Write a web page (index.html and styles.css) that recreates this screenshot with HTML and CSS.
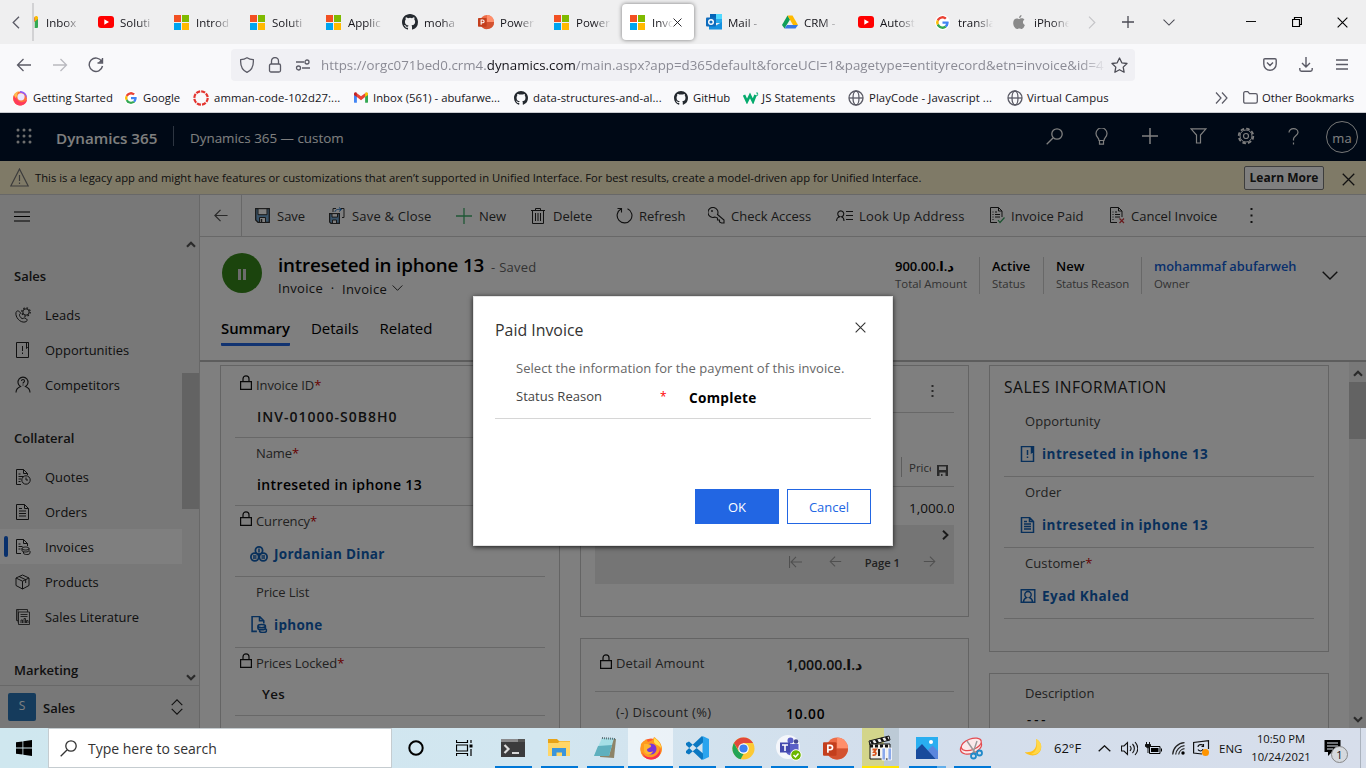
FILE: index.html
```html
<!DOCTYPE html>
<html lang="en">
<head>
<meta charset="utf-8">
<title>Invoice: intreseted in iphone 13</title>
<link rel="stylesheet" href="styles.css">
</head>
<body>
<svg class="defs" aria-hidden="true">
  <symbol id="ms" viewBox="0 0 15 15"><path fill="#f25022" d="M0 0h7v7H0z"/><path fill="#7fba00" d="M8 0h7v7H8z"/><path fill="#00a4ef" d="M0 8h7v7H0z"/><path fill="#ffb900" d="M8 8h7v7H8z"/></symbol>
  <symbol id="yt" viewBox="0 0 16 16"><rect y="2" width="16" height="12" rx="3" fill="#f00"/><path d="M6.3 5.3v5.4L11 8z" fill="#fff"/></symbol>
  <symbol id="gh" viewBox="0 0 16 16"><path fill="#24292f" fill-rule="evenodd" d="M8 0C3.58 0 0 3.58 0 8c0 3.54 2.29 6.53 5.47 7.59.4.07.55-.17.55-.38v-1.49c-2.01.37-2.53-.49-2.69-.94-.09-.23-.48-.94-.82-1.13-.28-.15-.68-.52-.01-.53.63-.01 1.08.58 1.23.82.72 1.21 1.87.87 2.33.66.07-.52.28-.87.51-1.07-1.78-.2-3.64-.89-3.64-3.95 0-.87.31-1.59.82-2.15-.08-.2-.36-1.02.08-2.12 0 0 .67-.21 2.2.82a7.6 7.6 0 0 1 4 0c1.53-1.04 2.2-.82 2.2-.82.44 1.1.16 1.92.08 2.12.51.56.82 1.27.82 2.15 0 3.07-1.87 3.75-3.65 3.95.29.25.54.73.54 1.48v2.2c0 .21.15.46.55.38A8 8 0 0 0 16 8c0-4.42-3.58-8-8-8z"/></symbol>
  <symbol id="ppt" viewBox="0 0 24 22"><circle cx="13.5" cy="11" r="10.5" fill="#ed6c47"/><path d="M13.500.5A10.500 10.500 0 0 1 24 11H13.500z" fill="#ff8f6b"/><path d="M24 11A10.500 10.500 0 0 1 4.500 16.500L13.500 11z" fill="#d35230"/><rect y="5" width="13" height="13" rx="1" fill="#c43e1c"/><path d="M4.700 15V8h2.200c3 0 3 4.200 0 4.200H4.700" fill="none" stroke="#fff" stroke-width="1.600"/></symbol>
  <symbol id="goo" viewBox="0 0 48 48"><path fill="#ea4335" d="M24 9.500c3.500 0 6.700 1.200 9.200 3.600l6.900-6.900C35.900 2.400 30.500 0 24 0 14.600 0 6.500 5.400 2.600 13.200l8 6.200C12.400 13.700 17.700 9.500 24 9.500z"/><path fill="#4285f4" d="M47 24.600c0-1.600-.2-3.100-.4-4.600H24v9h12.900c-.6 3-2.200 5.500-4.700 7.200l7.700 6C44.400 38 47 31.800 47 24.600z"/><path fill="#fbbc05" d="M10.500 28.600a14 14 0 0 1 0-9.200l-8-6.200a24 24 0 0 0 0 21.600z"/><path fill="#34a853" d="M24 48c6.500 0 11.900-2.100 15.900-5.800l-7.700-6c-2.200 1.500-4.900 2.300-8.200 2.300-6.300 0-11.600-4.200-13.500-9.900l-8 6.200C6.500 42.600 14.600 48 24 48z"/></symbol>
  <symbol id="gm" viewBox="0 0 16 12"><path fill="#4285f4" d="M0 1.500h3.300V12H1a1 1 0 0 1-1-1z"/><path fill="#34a853" d="M12.700 1.500H16V11a1 1 0 0 1-1 1h-2.300z"/><path fill="#ea4335" d="M3.300 5.500V1L8 4.600 12.700 1v4.500L8 9z"/><path fill="#c5221f" d="M0 1.800C0 0 2-.5 3.300.6v4.900L0 3z"/><path fill="#fbbc04" d="M16 1.800C16 0 14-.5 12.700.6v4.900L16 3z"/></symbol>
  <symbol id="globe" viewBox="0 0 16 16"><g fill="none" stroke="#5b5b66" stroke-width="1.300"><circle cx="8" cy="8" r="7"/><ellipse cx="8" cy="8" rx="3" ry="7"/><path d="M1 8h14"/></g></symbol>
  <symbol id="lock" viewBox="0 0 12 15"><path d="M.6 6.600h10.800v7.800H.6zM3 6.500V3.800a3 3 0 0 1 6 0v2.700" fill="none" stroke="#111" stroke-width="1.200"/></symbol>
  <symbol id="doc" viewBox="0 0 16 16"><path d="M1.500.5h8l4 4v11h-12zM9.500.5v4h4M4 7h7M4 9.500h7M4 12h7M4 4.500h3" fill="none" stroke="currentColor"/></symbol>
  <symbol id="opp" viewBox="0 0 16 16"><path d="M1.500.5h12v15h-12z M11.500.5v6l1-1 1 1v-6M7.500 4v5M7.500 10.500v1.500" fill="none" stroke="currentColor"/></symbol>
  <symbol id="invd" viewBox="0 0 16 16"><path d="M6 14.500H1.500V.5h7l4 4V7M8.500.5v4h4" fill="none" stroke="currentColor"/><path d="M7 9.500c0-2 7-2 7 0s-7 2-7 0v2c0 2 7 2 7 0v-2M8.500 13v1c0 2 6.500 2 6.500 0v-2" fill="none" stroke="currentColor"/></symbol>
  <symbol id="inv" viewBox="0 0 17 17"><path d="M8 15.500H1.500V.5h8l3.500 3.500v6M9.500.5V4H13M3.500 5h1M6 5h2M3.500 7.500h1M6 7.500h5M3.500 10h1M6 10h5M3.500 12.500h1" fill="none" stroke="#222"/></symbol>
  <symbol id="larr" viewBox="0 0 16 16"><path d="M15 8H1.500M7.500 2l-6 6 6 6" fill="none" stroke="currentColor" stroke-width="1.300"/></symbol>
  <symbol id="rarr" viewBox="0 0 16 16"><path d="M1 8h13.500M8.500 2l6 6-6 6" fill="none" stroke="currentColor" stroke-width="1.300"/></symbol>
  <symbol id="down" viewBox="0 0 16 9"><path d="M.7.700 8 8 15.300.7" fill="none" stroke="currentColor" stroke-width="1.400"/></symbol>
  <symbol id="chev" viewBox="0 0 10 7"><path d="M1 1.200 5 5.200 9 1.200" fill="none" stroke="currentColor" stroke-width="2.200"/></symbol>
  <symbol id="mag" viewBox="0 0 17 17"><path d="M.7 16.300 7 10" stroke="currentColor" stroke-width="1.300"/><circle cx="11" cy="6" r="5.200" fill="none" stroke="currentColor" stroke-width="1.300"/></symbol>
  <symbol id="x" viewBox="0 0 12 12"><path d="M.7.700l10.600 10.600M11.300.7.700 11.300" stroke="currentColor" stroke-width="1.200"/></symbol>
  <symbol id="floppy" viewBox="0 0 15 15"><path d="M.7.700h13.600v13.600H3L.7 12z" fill="#74a9d4" stroke="#333" stroke-width="1.300"/><path d="M3 .7h9v6H3z" fill="#fff" stroke="#333"/><path d="M4.500 14V9.500h6V14" fill="#fff" stroke="#333"/><path d="M6.500 11v3" stroke="#333" stroke-width="1.500"/></symbol>
</svg>

<header class="browser">
  <div class="tabstrip">
    <svg class="scroll-left" width="8" height="13" viewBox="0 0 8 13"><path d="M7 .7 1.200 6.500 7 12.300" fill="none" stroke="#5b5b66" stroke-width="1.300"/></svg>
    <div class="tab first"><svg width="16" height="12"><use href="#gm"/></svg><span>Inbox</span></div>
    <div class="tab"><svg width="16" height="16"><use href="#yt"/></svg><span>Soluti</span></div>
    <div class="tab"><svg width="15" height="15"><use href="#ms"/></svg><span>Introd</span></div>
    <div class="tab"><svg width="15" height="15"><use href="#ms"/></svg><span>Soluti</span></div>
    <div class="tab"><svg width="15" height="15"><use href="#ms"/></svg><span>Applic</span></div>
    <div class="tab"><svg width="16" height="16"><use href="#gh"/></svg><span>moha</span></div>
    <div class="tab"><svg width="16" height="16"><use href="#ppt"/></svg><span>Power</span></div>
    <div class="tab"><svg width="15" height="15"><use href="#ms"/></svg><span>Power</span></div>
    <div class="tab active"><svg width="15" height="15"><use href="#ms"/></svg><span>Invo</span><svg class="tab-x" width="9" height="9"><use href="#x"/></svg></div>
    <div class="tab"><svg width="16" height="16" viewBox="0 0 16 16"><path fill="#28a8ea" d="M4 0h12v9H4z"/><path fill="#0364b8" d="M4 0h6v6H4z"/><path fill="#50d9ff" d="M10 0h6v5h-6z"/><path fill="#1490df" d="M3 15.500V8l6 4 7-4v7.500z"/><rect y="3.500" width="10" height="9" rx="1" fill="#0f6cbd"/><circle cx="5" cy="8" r="2.300" fill="none" stroke="#fff" stroke-width="1.400"/></svg><span>Mail -</span></div>
    <div class="tab"><svg width="16" height="16" viewBox="0 0 16 16"><path fill="#0f9d58" d="M5.500 1.500 0 11l2.500 3.500L8 5.500z"/><path fill="#ffba00" d="M5.500 1.500h5L16 11h-5z"/><path fill="#3777e3" d="M5 11h11l-2.500 3.500h-11z"/></svg><span>CRM -</span></div>
    <div class="tab"><svg width="16" height="16"><use href="#yt"/></svg><span>Autost</span></div>
    <div class="tab goog"><svg width="13" height="13" class="disc"><use href="#goo"/></svg><span>transla</span></div>
    <div class="tab apple"><svg width="12" height="14" viewBox="0 0 12 14"><path fill="#8a8a8a" d="M8.500 0c.1 1.500-1 2.900-2.400 2.900C6 1.500 7.100.2 8.500 0zM6.200 4c.7 0 1.300-.7 2.500-.7 1 0 2 .5 2.700 1.400-2.200 1.300-1.800 4.300.5 5.200-.6 1.700-1.900 4-3.200 4-.9 0-1.200-.5-2.300-.5s-1.500.5-2.300.5C2.300 13.900.2 10.800.2 7.900c0-2.900 1.900-4.400 3.600-4.400 1.100 0 1.800.5 2.400.5z"/></svg><span>iPhone</span></div>
    <svg class="scroll-right" width="8" height="13" viewBox="0 0 8 13"><path d="M1 .7 6.800 6.500 1 12.300" fill="none" stroke="#c5c5c8" stroke-width="1.200"/></svg>
    <svg class="plus" width="12" height="12" viewBox="0 0 12 12"><path d="M6 0v12M0 6h12" stroke="#4b4b54" stroke-width="1.300"/></svg>
    <svg class="alltabs" width="12" height="7"><use href="#down"/></svg>
    <svg class="win-min" width="10" height="10" viewBox="0 0 10 10"><path d="M0 4.500h10" stroke="#111"/></svg>
    <svg class="win-max" width="10" height="10" viewBox="0 0 10 10"><path d="M.5 2.500h7v7h-7zM2.500 2.500v-2h7v7h-2" fill="none" stroke="#000" stroke-width="1.200"/></svg>
    <svg class="win-x" width="11" height="11"><use href="#x"/></svg>
  </div>
  <div class="toolbar">
    <svg width="16" height="16"><use href="#larr"/></svg>
    <svg class="dim" width="16" height="16"><use href="#rarr"/></svg>
    <svg width="16" height="16" viewBox="0 0 16 16"><path d="M13.800 4.500A6.700 6.700 0 1 0 14.500 9M14.500 1v5h-5" fill="none" stroke="#5b5b66" stroke-width="1.400"/><path d="M10 5.700h4.500V1.500z" fill="#5b5b66"/></svg>
    <div class="urlbar">
      <svg width="16" height="16" viewBox="0 0 16 16"><path d="M8 .8c2 1.300 4 1.800 6.300 1.900C14.800 9 12 13.500 8 15.300 4 13.500 1.200 9 1.700 2.700 4 2.600 6 2.100 8 .8z" fill="none" stroke="#5b5b66" stroke-width="1.300"/></svg>
      <svg width="14" height="16" viewBox="0 0 14 16"><rect x="1.500" y="7" width="11" height="8" rx="1.500" fill="none" stroke="#5b5b66" stroke-width="1.300"/><path d="M3.500 7V4a3.500 3.500 0 0 1 7 0v3" fill="none" stroke="#5b5b66" stroke-width="1.300"/></svg>
      <svg width="16" height="12" viewBox="0 0 16 12"><g fill="none" stroke="#5b5b66" stroke-width="1.300"><path d="M1 3h8M7 9h8"/><circle cx="12" cy="3" r="2"/><circle cx="3.500" cy="9" r="2"/></g></svg>
      <span class="url">https://orgc071bed0.crm4.<b>dynamics.com</b>/main.aspx?app=d365default&amp;forceUCI=1&amp;pagetype=entityrecord&amp;etn=invoice&amp;id=4</span>
      <svg width="17" height="16" viewBox="0 0 17 16"><path d="m8.500 1 2.300 4.800 5.200.7-3.800 3.600.9 5.100-4.600-2.500-4.600 2.500.9-5.100L1 6.500l5.200-.7z" fill="none" stroke="#4b4b54" stroke-width="1.300" stroke-linejoin="round"/></svg>
    </div>
    <svg width="14" height="13" viewBox="0 0 14 13"><path d="M2 .8h10c.8 0 1.200.4 1.200 1.200v4a6.200 6.200 0 0 1-12.400 0V2C.8 1.200 1.200.8 2 .8zM4 4.500l3 3 3-3" fill="none" stroke="#5b5b66" stroke-width="1.400"/></svg>
    <svg width="14" height="15" viewBox="0 0 14 15"><path d="M7 0v10M3 6l4 4 4-4M.8 11v1.500c0 1 .5 1.700 1.700 1.700h9c1.200 0 1.700-.7 1.700-1.700V11" fill="none" stroke="#5b5b66" stroke-width="1.400"/></svg>
    <svg width="12" height="11" viewBox="0 0 12 11"><path d="M0 1h12M0 5.500h12M0 10h12" stroke="#5b5b66" stroke-width="1.300"/></svg>
  </div>
  <div class="bookmarks">
    <svg width="16" height="16" viewBox="0 0 16 16"><circle cx="8" cy="8.500" r="7" fill="#ff7139"/><path d="M2 5C0 11 4 15.500 8 15.500S15 13 15 9c-2 4-7 4-9 1.500S2 7 2 5z" fill="#ff3b5c"/><circle cx="9" cy="6.800" r="3.600" fill="#ece6ff"/><path d="M8 1c5 0 7.500 4 6.700 7.500C14 5 12 3 8 2.500z" fill="#9059ff"/><path d="M2 5c1-2.500 3-3.500 5-3.800C5 3 5 4 5.500 5.500L3.500 8z" fill="#ffbd4f"/></svg><span>Getting Started</span>
    <svg width="12" height="12" class="disc"><use href="#goo"/></svg><span>Google</span>
    <svg width="16" height="16" viewBox="0 0 16 16"><circle cx="8" cy="8" r="6.700" fill="none" stroke="#e3342f" stroke-width="2.200" stroke-dasharray="4.200 1.060"/></svg><span class="wide">amman-code-102d27:...</span>
    <svg width="14" height="11"><use href="#gm"/></svg><span>Inbox (561) - abufarwe...</span>
    <svg width="14" height="14"><use href="#gh"/></svg><span class="wide">data-structures-and-al...</span>
    <svg width="14" height="14"><use href="#gh"/></svg><span>GitHub</span>
    <svg width="16" height="12" viewBox="0 0 16 12"><path d="M1 3l3 6.500 3-6 3 6 2.500-6.500" fill="none" stroke="#04aa6d" stroke-width="2.600"/><path d="M13 1h2l-1 1.200c1.500 0 1 2-1 1.500" fill="none" stroke="#04aa6d" stroke-width=".8"/></svg><span class="wide">JS Statements</span>
    <svg width="16" height="16"><use href="#globe"/></svg><span class="wide">PlayCode - Javascript ...</span>
    <svg width="16" height="16"><use href="#globe"/></svg><span class="wide">Virtual Campus</span>
    <svg width="13" height="12" viewBox="0 0 13 12"><path d="M1 .500 6 6l-5 5.500M7 .500 12 6l-5 5.500" fill="none" stroke="#5b5b66" stroke-width="1.200"/></svg>
    <svg width="15" height="13" viewBox="0 0 15 13"><path d="M.7 10.500v-8C.7 1.300 1.200.7 2.200.7h2.600l1.700 2h6c1.200 0 1.800.6 1.800 1.700v6c0 1.200-.6 1.800-1.800 1.800h-10C1.200 12.200.7 11.600.7 10.500z" fill="none" stroke="#5b5b66" stroke-width="1.300"/></svg><span class="tight">Other Bookmarks</span>
  </div>
</header>

<main class="app">
  <div class="suitebar">
    <svg class="waffle" width="16" height="16" viewBox="0 0 16 16"><g fill="#ddd"><circle cx="2" cy="2" r="1.500"/><circle cx="8" cy="2" r="1.500"/><circle cx="14" cy="2" r="1.500"/><circle cx="2" cy="8" r="1.500"/><circle cx="8" cy="8" r="1.500"/><circle cx="14" cy="8" r="1.500"/><circle cx="2" cy="14" r="1.500"/><circle cx="8" cy="14" r="1.500"/><circle cx="14" cy="14" r="1.500"/></g></svg>
    <span class="brand">Dynamics 365</span>
    <span class="appname">Dynamics 365 — custom</span>
    <div class="suite-icons">
      <svg width="17" height="17"><use href="#mag"/></svg>
      <svg width="13" height="17" viewBox="0 0 13 17"><path d="M4 12.500c0-3-3-3.500-3-7a5.500 5.500 0 0 1 11 0c0 3.500-3 4-3 7zM4.500 12.500v3.700h4v-3.700" fill="none" stroke="#fff" stroke-width="1.200"/></svg>
      <svg width="16" height="16" viewBox="0 0 16 16"><path d="M8 0v16M0 8h16" stroke="#fff" stroke-width="1.500"/></svg>
      <svg width="17" height="16" viewBox="0 0 17 16"><path d="M1 .8h15L10.500 7v8h-4V7z" fill="none" stroke="#fff" stroke-width="1.200"/></svg>
      <svg width="18" height="18" viewBox="0 0 18 18"><circle cx="9" cy="9" r="7.300" fill="none" stroke="#fff" stroke-width="1.800" stroke-dasharray="3.600 2.130"/><circle cx="9" cy="9" r="6" fill="none" stroke="#fff" stroke-width="1"/><circle cx="9" cy="9" r="2.500" fill="none" stroke="#fff" stroke-width="1.200"/></svg>
      <svg width="11" height="17" viewBox="0 0 11 17"><path d="M1 4.500C1 2 3 .7 5.500.7S10 2.300 10 4.500C10 7.500 5.500 8 5.500 11v1.500M5.500 14.500v2" fill="none" stroke="#fff" stroke-width="1.200"/></svg>
    </div>
    <span class="avatar">ma</span>
  </div>

  <div class="notice">
    <svg width="19" height="19" viewBox="0 0 19 19"><path d="M9.500 1 18.200 18H.8zM9.500 7v6M9.500 14.500v1.500" fill="none" stroke="#777" stroke-width="1.200"/></svg>
    <p>This is a legacy app and might have features or customizations that aren’t supported in Unified Interface. For best results, create a model-driven app for Unified Interface.</p>
    <span class="learn">Learn More</span>
    <svg class="notice-x" width="13" height="13"><use href="#x"/></svg>
  </div>

  <div class="workspace">
    <nav class="sitemap">
      <div class="burger"><svg width="16" height="11" viewBox="0 0 16 11"><path d="M0 1h16M0 5.500h16M0 10h16" stroke="#000" stroke-width="1.100"/></svg></div>
      <h3>Sales</h3>
      <a><svg width="16" height="16" viewBox="0 0 16 16"><path d="M1 5.500C0 10 5 16 10 15c2-.5 3-2 1.500-3L10 11c-1.500-.5-1.500 1-3 .5S4 8 4.500 7.500s1.500-1 .5-2.300S1.800 3 1 5.500z" fill="none" stroke="#222"/><circle cx="11" cy="5" r="3.200" fill="none" stroke="#222"/><circle cx="11" cy="5" r="4.200" fill="none" stroke="#222" stroke-width="1.200" stroke-dasharray="1.600 1.700"/></svg>Leads</a>
      <a><svg width="16" height="16"><use href="#opp"/></svg>Opportunities</a>
      <a><svg width="16" height="17" viewBox="0 0 16 17"><path d="M1 16.500c0-3 2-5 4.500-6a5 5 0 1 1 5 0c2.500 1 4.500 3 4.500 6M6.500 5c0-2 3-2 3 0 0 1.200-1.500 1.300-1.500 2.500M8 8.500v1" fill="none" stroke="#222" stroke-width="1.100"/></svg>Competitors</a>
      <h3>Collateral</h3>
      <a><svg width="16" height="16" viewBox="0 0 16 16"><path d="M6 15.500H1.500V.5h7l4 4V6M8.500.5v4h4M3.500 5h2M3.500 7.500h5M3.500 10h2.500M3.500 12.500h2" fill="none" stroke="#222"/><circle cx="11" cy="11" r="4.200" fill="none" stroke="#222"/><path d="M11 8.500V11h2" fill="none" stroke="#222"/></svg>Quotes</a>
      <a><svg width="16" height="16"><use href="#doc"/></svg>Orders</a>
      <a class="selected"><svg width="16" height="16" viewBox="0 0 16 16"><use href="#invd"/><path d="M3.500 5h2M3.500 7.500h4M3.500 10h2" stroke="currentColor"/></svg>Invoices</a>
      <a><svg width="16" height="16" viewBox="0 0 16 16"><path d="M7.500 1 14 4v7.500l-6.500 3.500L1 11.500V4zM1 4l6.500 3.200L14 4M7.500 7.200V15M4 2.500l6.700 3.200V9" fill="none" stroke="#222"/></svg>Products</a>
      <a><svg width="16" height="16" viewBox="0 0 16 16"><path d="M12.500 3V.5H1.500v11H3M3.500 3h11v12.500h-11zM3 .5v13M5.500 5.500h7M5.500 7.500h7M6 14v-3h1.500v3M9 14v-4.500h1.500V14M11.500 14v-2.500H13V14" fill="none" stroke="#333" stroke-width=".9"/></svg>Sales Literature</a>
      <h3>Marketing</h3>
      <div class="side-scroll"><svg width="10" height="7"><use href="#chev"/></svg><i></i><svg width="10" height="7"><use href="#chev"/></svg></div>
      <div class="area"><b>S</b><span>Sales</span><svg width="12" height="16" viewBox="0 0 12 16"><path d="M.7 6.200 6 .9l5.300 5.300M.7 9.800 6 15.100l5.300-5.300" fill="none" stroke="#222" stroke-width="1.100"/></svg></div>
    </nav>

    <section class="record">
      <div class="commands">
        <span class="back"><svg width="16" height="15"><use href="#larr"/></svg></span>
        <svg width="15" height="15"><use href="#floppy"/></svg><span>Save</span>
        <svg width="16" height="17" viewBox="0 0 16 17"><path d="M4 5V1.500h3M12 1.500h3v9h-2" fill="none" stroke="#333"/><path d="M6 5c0-2 2-3 6-2.500M10 .5l2.500 2-2.500 2" fill="none" stroke="#1f6fc0"/><path d="M.6 6.600h9.800v9.800H2L.6 15z" fill="#74a9d4" stroke="#333" stroke-width="1.200"/><path d="M3 6.600h5.500v3.500H3zM3.500 16v-3h4v3" fill="#fff" stroke="#333"/></svg><span class="sc">Save &amp; Close</span>
        <svg width="16" height="16" viewBox="0 0 16 16"><path d="M8 0v16M0 8h16" stroke="#3fae6c" stroke-width="1.300"/></svg><span>New</span>
        <svg width="14" height="16" viewBox="0 0 14 16"><path d="M0 2.500h14M4.500 2.500v-2h5v2M1.500 2.500v13h11v-13M4.500 5v8M7 5v8M9.500 5v8" fill="none" stroke="#222"/></svg><span>Delete</span>
        <svg width="17" height="17" viewBox="0 0 17 17"><path d="M5 2A7.400 7.400 0 1 0 11.500 1.700M1.500 1.500H5.500V5.500" fill="none" stroke="#222" stroke-width="1.100"/></svg><span>Refresh</span>
        <svg width="17" height="17" viewBox="0 0 17 17"><path d="M9.500 7.500a5 5 0 1 0-2.500 2.500l2.500 1v2h2v2l2 1h2.500v-3z" fill="none" stroke="#222" stroke-width="1.100"/><circle cx="4" cy="4" r=".9" fill="#222"/></svg><span>Check Access</span>
        <svg width="17" height="12" viewBox="0 0 17 12"><path d="M.6 11c0-3 2-4 3.400-4.200a3 3 0 1 1 1.500 0C7.500 7.500 8 9 8 11M10 1.500h7M10 5.500h7M10 9.500h7" fill="none" stroke="#222" stroke-width="1.100"/></svg><span class="sc">Look Up Address</span>
        <svg width="17" height="17" viewBox="0 0 17 17"><use href="#inv"/><path d="m9 13 2 2.500 4.500-5" fill="none" stroke="#36a35f" stroke-width="1.200"/></svg><span>Invoice Paid</span>
        <svg width="17" height="17" viewBox="0 0 17 17"><use href="#inv"/><path d="m10.500 11.500 4.500 4.500M15 11.500 10.500 16" fill="none" stroke="#d13438" stroke-width="1.200"/></svg><span>Cancel Invoice</span>
        <svg width="3" height="15" viewBox="0 0 3 15"><path d="M.5 0h2v2h-2zM.5 6.500h2v2h-2zM.5 13h2v2h-2z" fill="#222"/></svg>
      </div>

      <div class="form-head">
        <div class="identity">
          <span class="badge"></span>
          <div class="names">
            <div class="title"><h1>intreseted in iphone 13</h1><span>- Saved</span></div>
            <div class="sub"><span>Invoice</span><i>·</i><span>Invoice</span><svg width="11" height="6"><use href="#down"/></svg></div>
          </div>
          <div class="fact f1"><b>900.00د.ا.&rlm;</b><span>Total Amount</span></div>
          <div class="fact f2"><b>Active</b><span>Status</span></div>
          <div class="fact f3"><b>New</b><span>Status Reason</span></div>
          <div class="fact f4"><b>mohammaf abufarweh</b><span>Owner</span></div>
          <svg class="expand" width="16" height="9"><use href="#down"/></svg>
        </div>
        <div class="form-tabs"><span class="on">Summary</span><span>Details</span><span>Related</span></div>
      </div>

      <div class="form-body">
        <div class="col c1">
          <div class="card">
            <div class="field"><label><svg width="12" height="15"><use href="#lock"/></svg>Invoice ID<em>*</em></label><b class="val grey code">INV-01000-S0B8H0</b></div>
            <div class="field"><label>Name<em>*</em></label><b class="val dark">intreseted in iphone 13</b></div>
            <div class="field look"><label><svg width="12" height="15"><use href="#lock"/></svg>Currency<em>*</em></label><b class="link"><svg width="18" height="16" viewBox="0 0 18 16"><g fill="none" stroke="currentColor" stroke-width="1.800"><circle cx="9" cy="4.500" r="3.600"/><circle cx="4.800" cy="11" r="3.900"/><circle cx="13.200" cy="11" r="3.900"/></g><path d="M9 2.500v4M3 10h3.500M3 12h3.500M11.500 10H15M11.500 12H15" stroke="currentColor"/></svg>Jordanian Dinar</b></div>
            <div class="field look"><label>Price List</label><b class="link"><svg width="18" height="17" viewBox="0 0 16 16"><use href="#invd"/></svg>iphone</b></div>
            <div class="field"><label><svg width="12" height="15"><use href="#lock"/></svg>Prices Locked<em>*</em></label><b class="val grey yes">Yes</b></div>
          </div>
        </div>
        <div class="col c2">
          <div class="card lines">
            <div class="grid-cmd"><svg width="3" height="12" viewBox="0 0 3 12"><path d="M.5 0h2v2h-2zM.5 5h2v2h-2zM.5 10h2v2h-2z" fill="#555"/></svg></div>
            <div class="grid-head"><span>Price</span><svg width="11" height="11" viewBox="0 0 11 11"><path d="M0 0h11v11H8.500V7.500h-6V11H0zM2 1.500V5h7V1.500z" fill="#555" fill-rule="evenodd"/><path d="M4 9h1.500v2H4z" fill="#555"/></svg></div>
            <div class="grid-row">1,000.0</div>
            <div class="pager">
              <svg class="more" width="7" height="10" viewBox="0 0 7 10"><path d="m1 .7 4.500 4.300L1 9.300" fill="none" stroke="#333" stroke-width="1.900"/></svg>
              <div class="pages"><svg width="13" height="12" viewBox="0 0 13 12"><path d="M.5 0v12M13 6H2M7 .8 2 6l5 5.200" fill="none" stroke="#a0a0a0" stroke-width="1.100"/></svg><svg width="13" height="13"><use href="#larr"/></svg><span>Page 1</span><svg width="13" height="13"><use href="#rarr"/></svg></div>
            </div>
          </div>
          <div class="card totals">
            <div class="pair"><label><svg width="12" height="15"><use href="#lock"/></svg>Detail Amount</label><b class="money">1,000.00د.ا.&rlm;</b></div>
            <div class="pair"><label>(-) Discount (%)</label><b class="dark">10.00</b></div>
          </div>
        </div>
        <div class="col c3">
          <div class="card info">
            <h2>SALES INFORMATION</h2>
            <div class="field look"><label>Opportunity</label><b class="link"><svg width="16" height="16" viewBox="0 0 16 16"><use href="#opp"/><path d="M11 1h3v5h-3z" fill="currentColor"/></svg>intreseted in iphone 13</b></div>
            <div class="field look"><label>Order</label><b class="link"><svg width="16" height="16"><use href="#doc"/></svg>intreseted in iphone 13</b></div>
            <div class="field look"><label>Customer<em>*</em></label><b class="link"><svg width="16" height="14" viewBox="0 0 15 14"><path d="M.7.700h13.600v12.600H.7zM3 13c0-3 2-4 3-4.500a3.200 3.200 0 1 1 3 0c1 .5 3 1.500 3 4.500" fill="none" stroke="currentColor" stroke-width="1.400"/></svg>Eyad Khaled</b></div>
          </div>
          <div class="card desc"><label>Description</label><b>---</b></div>
        </div>
        <div class="body-scroll"><svg width="10" height="7"><use href="#chev"/></svg><i></i><svg width="10" height="7"><use href="#chev"/></svg></div>
      </div>
    </section>
  </div>

  <div class="veil"></div>
  <div class="dialog" role="dialog">
    <div class="dlg-head"><h2>Paid Invoice</h2><svg width="11" height="11"><use href="#x"/></svg></div>
    <p>Select the information for the payment of this invoice.</p>
    <div class="dlg-row"><label>Status Reason</label><em>*</em><b>Complete</b></div>
    <div class="dlg-foot"><button class="ok">OK</button><button class="cancel">Cancel</button></div>
  </div>
</main>

<footer class="taskbar">
  <div class="start"><svg width="16" height="16" viewBox="0 0 16 16"><path d="M0 2.300 6.500 1.400v6.200H0zM7.300 1.300 16 0v7.600H7.300zM0 8.400h6.500v6.200L0 13.700zM7.300 8.400H16V16l-8.700-1.300z"/></svg></div>
  <div class="search"><svg width="17" height="17"><use href="#mag"/></svg><span>Type here to search</span></div>
  <div class="pinned">
    <div class="t cortana"><svg width="16" height="16" viewBox="0 0 16 16"><circle cx="8" cy="8" r="6.700" fill="none" stroke="#000" stroke-width="2"/></svg></div>
    <div class="t view"><svg width="17" height="16" viewBox="0 0 17 16"><path d="M.5 0v2.500h11V0M.5 5h11v6H.5zM.5 16v-2.500h11V16M15 0v3M15 9v7" fill="none" stroke="#000" stroke-width="1.200"/><path d="M13.500 4.500h3v3h-3z"/></svg></div>
    <div class="t run"><svg width="24" height="18" viewBox="0 0 24 18"><rect width="24" height="18" fill="#3b3b3d"/><path d="M0 0h17v3H0z" fill="#8a8a8c"/><path d="M17 0h7v3h-7z" fill="#555"/><path d="m3.500 6 4 4-4 4" fill="none" stroke="#ddd" stroke-width="2.200"/><path d="M11 14h7" stroke="#fff" stroke-width="1.600"/></svg></div>
    <div class="t run"><svg width="22" height="20" viewBox="0 0 22 20"><path d="M0 1h9l2 2h11v15H0z" fill="#e8a317"/><path d="M0 5h10l1.500-1.500H22V18H0z" fill="#ffd667"/><path d="M4 18v-8h14v8h-4v-3.500H8.500V18z" fill="#3a95dc"/></svg></div>
    <div class="t run"><svg width="24" height="24" viewBox="0 0 24 24"><path d="m9 2 14 1-2 19-14-1z" fill="#8d8468"/><path d="M9 2h12l-5 18-15 0z" fill="#a5dfe6"/><path d="m5 10 14-1-3 11-15 0z" fill="#5fb0be"/><path d="m9 2 13 1" stroke="#607078" stroke-width="2" stroke-dasharray="1 1"/></svg></div>
    <div class="t run focus"><svg width="24" height="24" viewBox="0 0 24 24"><circle cx="12" cy="13" r="10.500" fill="#ff5a2c"/><path d="M2 8c2-3 4-3 5-5l2 3c2-1 5-1 6-5 3 2 8 6 8 12 0 6-5 10-11 10C5 23 1 19 1.500 12z" fill="#ff9a1f"/><path d="M3 16c2 5 8 6.500 12 4.500s7-6 5.500-10c3 7-1 13-8.500 13-5 0-8-3-9-7.500z" fill="#fa2f50"/><circle cx="12" cy="13" r="5.500" fill="#7a35d8"/><path d="M5 8c4 0 7 0 7 2s-4 2-4 4c0 2 4 3 6 1-1 5-8 4-9 0z" fill="#ffb52e"/><path d="M15 2c4 2 7 6 7 10-2-3-6-3-7-6z" fill="#ffe14d"/></svg></div>
    <div class="t run"><svg width="24" height="24" viewBox="0 0 24 24"><path d="M17.500 0 24 3v18l-6.500 3z" fill="#2aa4ee"/><path d="M18 1.500v5L4 18.500 1 17v-2L17 0zM18 22.500v-5L4 5.500 1 7v2l16 15z" fill="#0b78c2"/></svg></div>
    <div class="t run"><svg width="23" height="23" viewBox="0 0 24 24"><circle cx="12" cy="12" r="11.500" fill="#fcc934"/><path d="M2 6.300A11.500 11.500 0 0 1 22 6.300H12L7.500 14.500z" fill="#e2473a"/><path d="M2 6.300 7 15l5 2.700-3 5.500A11.500 11.500 0 0 1 2 6.300z" fill="#23a455"/><circle cx="12" cy="12" r="5.500" fill="#fff"/><circle cx="12" cy="12" r="4.300" fill="#3d7ff0"/></svg></div>
    <div class="t run"><svg width="26" height="26" viewBox="0 0 26 26"><circle cx="12" cy="12" r="12" fill="#f4f6fb"/><circle cx="14.500" cy="5.500" r="3" fill="#5b5fc7"/><circle cx="20" cy="6.500" r="2.300" fill="#444791"/><path d="M10 9h12.500v7c0 6-12.500 6-12.500 0z" fill="#5b5fc7"/><rect x="4" y="7.500" width="10" height="10" fill="#4348ae"/><path d="M6 10h6M9 10v6" stroke="#fff" stroke-width="1.600"/><circle cx="20" cy="20" r="5.300" fill="#6bb700" stroke="#fff"/><path d="m17.500 20 2 2 3-3.500" fill="none" stroke="#fff" stroke-width="1.500"/></svg></div>
    <div class="t run"><svg width="25" height="23"><use href="#ppt"/></svg></div>
    <div class="t run clip"><svg width="25" height="26" viewBox="0 0 25 26"><path d="m1 6 20-5 1 4L2 10z" fill="#eee" stroke="#111"/><path d="m3 5.500 2 3.500M8 4.500l2 3.500M13 3l2 3.500M18 2l2 3.500" stroke="#111" stroke-width="2.500"/><path d="M2 9h20v15H2z" fill="#f1eee6" stroke="#111"/><path d="M2 11h20" stroke="#111" stroke-width="3" stroke-dasharray="3 2"/><path d="M4.500 14.500H8l-2 2.500c3 0 2.500 4-1.500 3" fill="none" stroke="#d9541e" stroke-width="1.800"/><path d="M11 14v7" stroke="#222" stroke-width="2"/><path d="M14 13h3.500v12H14zM20 13h3.500v12H20z" fill="#8ba9ea" stroke="#fff" stroke-width=".8"/></svg></div>
    <div class="t run photos"><svg width="22" height="22" viewBox="0 0 22 22"><path d="M0 0h22v22H0z" fill="#29aef0"/><path d="m12 13 4.500-4.500L22 14v8H12z" fill="#5a86dd"/><path d="M0 22v-9l6-6 13.500 15z" fill="#184a9c"/><circle cx="15" cy="5" r="2" fill="#fff"/></svg></div>
    <div class="t run"><svg width="25" height="24" viewBox="0 0 25 24"><g fill="#fbe9ea" stroke="#e34b50" stroke-width="1.200"><ellipse cx="12" cy="11" rx="11" ry="6.500" transform="rotate(-20 12 11)"/><ellipse cx="12.500" cy="8.500" rx="10.500" ry="5.500" transform="rotate(-20 12 9)"/></g><path d="m8 5 9 13M18 5l-4 12" stroke="#999" stroke-width="1.400"/><g fill="none" stroke="#2089c9" stroke-width="1.800"><circle cx="14.500" cy="20" r="2.500"/><circle cx="20.500" cy="17" r="2.500"/></g></svg></div>
  </div>
  <div class="tray">
    <svg width="20" height="20" viewBox="0 0 20 20"><path d="M12 1c4 2 6 6 5 10-1.500 6-8 8-14 5-1-.5-1.500-1-2-2 6 1 10-2 11-6 .5-2.500.5-5 0-7z" fill="#ffc21c"/><path d="M12 1c4 2 6 6 5 9-1 5-5 7-10 6 6-2 7-9 5-15z" fill="#ffd84a"/></svg>
    <span class="temp">62°F</span>
    <svg width="13" height="7" viewBox="0 0 13 7"><path d="M.7 6.300 6.500.8l5.800 5.500" fill="none" stroke="#111" stroke-width="1.300"/></svg>
    <svg width="17" height="15" viewBox="0 0 17 15"><path d="M.5 5h2.500l3.500-3.500v12L3 10H.5zM9 5c1.300 1.500 1.300 3.500 0 5M11.500 3c2.500 2.500 2.500 6.500 0 9M14 1c3.500 4 3.500 9 0 13" fill="none" stroke="#111" stroke-width="1.100"/></svg>
    <svg width="17" height="13" viewBox="0 0 17 13"><path d="M4.500 4.500h10.500v7H4.500zM16.500 6.500v3" fill="none" stroke="#000"/><path d="M6 6h7.500v4H6z"/><path d="M1.500 0v2M4.500 0v2M.5 2.500h5v2l-2.500 1.500-2.500-1.500zM3 6v5" fill="#111" stroke="#111"/></svg>
    <svg width="13" height="13" viewBox="0 0 13 13"><path d="M.7 12.500C1 6 6 1 12.500.7M3.700 12.500c.3-4.500 4-8.300 8.800-8.800M6.700 12.500c.3-3 2.800-5.500 5.800-5.800" fill="none" stroke="#222" stroke-width="1.200"/><circle cx="11" cy="11" r="1.700"/></svg>
    <svg width="17" height="16" viewBox="0 0 17 16"><path d="M9 14 .6 13V2.500L15.500.7V9" fill="none" stroke="#111" stroke-width="1.200"/><path d="M5 7c0-3 5-3 5.500-1M5 9.500c1 2 4.500 2 5-.5M10.500 4v2.500H8.500" fill="none" stroke="#111" stroke-width="1.100"/><circle cx="12.500" cy="12.500" r="3.500" fill="#ff9500"/></svg>
    <span class="lang">ENG</span>
    <div class="clock"><span>10:50 PM</span><span>10/24/2021</span></div>
    <div class="notif"><svg width="17" height="16" viewBox="0 0 17 16"><path d="M.5 0h16v12H8l-4 4v-4H.5z"/><path d="M3 3h11M3 6h11M3 9h6" stroke="#dfe6ee" stroke-width="1.200"/></svg><span>1</span></div>
    <i class="peek"></i>
  </div>
</footer>
</body>
</html>
```

FILE: styles.css
```css
* { box-sizing: border-box; margin: 0; padding: 0; }
body {
  width: 1366px; height: 768px; overflow: hidden;
  display: flex; flex-direction: column;
  font-family: "Open Sans", "Noto Sans", "DejaVu Sans", sans-serif;
  font-size: 13px; color: #111; background: #fff;
}
svg { display: block; flex: none; }
.defs { position: absolute; width: 0; height: 0; }
em { font-style: normal; }
span, b, label, a, h1, h2, h3, p { white-space: nowrap; }

/* Browser chrome */
.browser { height: 113px; background: #f9f9fb; border-bottom: 1px solid #c9cbd0; flex: none; }
.tabstrip { height: 44px; background: #efeff0; display: flex; align-items: center; font-size: 11.5px; color: #15141a; }
.scroll-left { margin-left: 12px; margin-right: 12px; }
.tab { width: 76px; height: 38px; padding-left: 8px; display: flex; align-items: center; gap: 6px; flex: none; }
.tab > svg:first-child { margin-right: auto; }
.tab span { width: 40px; margin-right: 6px; -webkit-mask-image: linear-gradient(90deg, #000 45%, transparent 88%); mask-image: linear-gradient(90deg, #000 45%, transparent 88%); }
.tab.first { width: 58px; padding-left: 0; gap: 0; overflow: hidden; border-left: 2px solid #d2d2d4; }
.tab.first > svg { margin-left: -12px; }
.tab.first span { margin-right: 4px; }
.tab.active { background: #fff; border-radius: 4px; box-shadow: 0 0 4px rgba(0,0,0,.5); height: 36px; width: 72px; margin: 0 4px 0 0; position: relative; padding-left: 8px; }
.tab.active span { width: 28px; margin-right: 14px; -webkit-mask-image: linear-gradient(90deg, #000 25%, transparent 75%); mask-image: linear-gradient(90deg, #000 25%, transparent 75%); }
.tab-x { position: absolute; right: 12px; top: 14px; }
.disc { background: #fff; border-radius: 50%; box-shadow: 0 0 0 1px #fff; }
.tab.goog { padding-left: 10px; }
.tab.goog span { margin-right: 4px; }
.tab.apple { padding-left: 11px; }
.tab.apple span { margin-right: 4px; }
.scroll-right { margin-left: 10px; margin-right: 26px; }
.plus { margin-right: 29px; }
.alltabs { color: #4b4b54; margin-right: 71px; }
.win-min { margin-right: 36px; }
.win-max { margin-right: 35px; }
.win-x { color: #000; }

.toolbar { height: 41px; display: flex; align-items: center; padding-left: 16px; color: #5b5b66; }
.toolbar > svg { margin-right: 20px; }
.toolbar > svg.dim { color: #b9b9bf; }
.toolbar > svg:nth-child(3) { margin-right: 127px; }
.urlbar { width: 904px; height: 32px; background: #f0f0f4; border-radius: 4px; display: flex; align-items: center; padding: 0 7px 0 8px; margin-right: 128px; }
.urlbar svg { margin-right: 13px; }
.urlbar svg:nth-child(3) { margin-right: 10px; }
.urlbar svg:last-child { margin: 0; }
.url { flex: 1; font-size: 13.3px; letter-spacing: .02px; color: #8b8b95; -webkit-mask-image: linear-gradient(90deg, #000 96%, transparent 99.500%); mask-image: linear-gradient(90deg, #000 96%, transparent 99.500%); }
.url b { font-weight: 400; color: #15141a; }
.toolbar > svg:nth-child(5) { margin-right: 22px; }
.toolbar > svg:nth-child(6) { margin-right: 23px; }
.toolbar > svg:last-child { margin: 0; }

.bookmarks {
  height: 26px; padding: 0 0 0 12px; align-items: center; font-size: 11.300px; color: #15141a;
  display: grid;
  grid-template-columns: 21px 92px 18px 50px 21px 140px 19px 141px 19px 141px 19px 50px 19px 86px 21px 138px 20px 188px 28px 19px 104px;
}
.bookmarks { height: 25px; }
.bookmarks .wide { letter-spacing: .1px; }
.bookmarks .tight { letter-spacing: -.08px; }

/* App shell */
.app { height: 615px; flex: none; position: relative; display: flex; flex-direction: column; overflow: hidden; }
.suitebar { height: 48px; background: #00132c; color: #fff; display: flex; align-items: center; flex: none; }
.waffle { margin: -2px 24px 0 16px; }
.brand { font-size: 15.200px; font-weight: 600; width: 117px; padding-top: 1px; }
.appname { font-size: 13.400px; border-left: 1px solid #5a6a82; height: 20px; line-height: 24px; padding-left: 16px; width: 858px; margin-top: -2px; flex: none; }
.suite-icons { display: grid; grid-template-columns: 47px 47px 49px 48px 48px 46px; width: 285px; flex: none; align-items: center; justify-items: center; margin-top: -2px; }
.avatar { width: 32px; height: 32px; flex: none; border: 1px solid #eee; border-radius: 50%; text-align: center; line-height: 32px; font-size: 13px; margin-left: 10px; }

.notice { height: 34px; background: #fff4ce; border-bottom: 1px solid #d0d0d0; display: flex; align-items: center; padding-left: 10px; flex: none; color: #222; }
.notice p { font-size: 11.260px; margin-left: 6px; width: 1209px; }
.learn { width: 80px; height: 24px; border: 1px solid #7a7a7a; background: #fff; border-radius: 2px; font-weight: 700; font-size: 12px; line-height: 22px; text-align: center; flex: none; }
.notice-x { margin: 4px 0 0 18px; }

.workspace { flex: 1; display: flex; min-height: 0; }
.sitemap { width: 200px; background: #f0f0f0; border-right: 1px solid #d0d0d0; position: relative; color: #222; flex: none; }
.burger { height: 45px; padding: 16px 0 0 14px; }
.sitemap h3 { height: 57px; padding: 15px 0 0 14px; line-height: 43px; font-size: 13px; font-weight: 600; }
.sitemap a { display: flex; align-items: center; height: 35px; padding-left: 15px; gap: 14px; width: 182px; font-size: 12.900px; letter-spacing: .04px; }
.sitemap a.selected { background: #fff; position: relative; }
.sitemap a.selected::before { content: ""; position: absolute; left: 4px; top: 7px; width: 4px; height: 21px; border-radius: 2px; background: #1160d9; }
.side-scroll { position: absolute; right: 0; top: 46px; width: 17px; height: 440px; display: flex; flex-direction: column; align-items: center; color: #555; }
.side-scroll svg:first-child, .body-scroll svg:first-child { transform: rotate(180deg); }
.side-scroll i { width: 17px; height: 136px; background: #c6c6c6; margin-top: 125px; margin-bottom: auto; }
.area { position: absolute; left: 0; bottom: 0; width: 199px; height: 43px; border-top: 1px solid #d0d0d0; background: #f0f0f0; display: flex; align-items: center; padding: 0 0 0 8px; }
.area b { width: 28px; height: 28px; background: #2b76b9; border-radius: 2px; color: #fff; font-weight: 400; text-align: center; line-height: 26px; font-size: 12px; }
.area span { margin-left: 7px; font-size: 13px; font-weight: 600; width: 128px; padding-top: 2px; }

.record { width: 1166px; display: flex; flex-direction: column; background: #fff; }
.commands {
  height: 42px; border-bottom: 1px solid #d0d0d0; align-items: center; color: #333; font-size: 13px;
  display: grid; flex: none;
  grid-template-columns: 55px 22px 52px 23px 104px 23px 52px 22px 63px 23px 69px 23px 105px 23px 130px 22px 98px 22px 119px 3px;
}
.commands .sc { letter-spacing: .2px; }
.back { border-right: 1px solid #d0d0d0; width: 42px; height: 41px; display: flex; align-items: center; justify-content: center; color: #555; }
.form-head { height: 125px; border-bottom: 2px solid #bbb; padding: 16px 0 0 22px; flex: none; }
.identity { display: flex; height: 49px; }
.badge { width: 40px; height: 40px; border-radius: 50%; background: #37881a; display: flex; align-items: center; justify-content: center; gap: 2px; flex: none; }
.badge::before, .badge::after { content: ""; width: 3px; height: 11px; background: #d8d8d8; margin-top: 3px; }
.names { width: 633px; padding-left: 16px; flex: none; }
.title { display: flex; align-items: center; gap: 7px; height: 25px; }
h1 { font-size: 18.800px; font-weight: 600; color: #000; line-height: 25px; letter-spacing: -.16px; }
.title span { font-size: 13px; color: #666; padding-top: 3px; letter-spacing: .25px; }
.sub { display: flex; align-items: center; height: 20px; font-size: 13px; color: #222; letter-spacing: .33px; }
.sub span:nth-child(3) { padding-top: 1px; }
.sub i { font-style: normal; width: 19px; text-align: center; }
.sub svg { margin-left: 5px; }
.fact { display: flex; flex-direction: column; height: 37px; margin-top: 4px; flex: none; }
.fact b { font-size: 13px; font-weight: 600; line-height: 18px; color: #000; }
.fact span { font-size: 11.400px; line-height: 17px; color: #666; }
.fact + .fact { border-left: 1px solid #d0d0d0; padding-left: 12px; }
.f1 { width: 84px; } .f2 { width: 64px; } .f3 { width: 98px; } .f4 { width: 181px; }
.f3 span { letter-spacing: -.15px; }
.f4 b { color: #1160d9; font-size: 12.800px; }
.expand { margin-top: 18px; color: #222; }
.form-tabs { display: flex; gap: 21px; font-size: 15px; color: #000; margin: 14px 0 0 -1px; }
.form-tabs span { height: 30px; line-height: 24px; }
.form-tabs .on { font-weight: 600; border-bottom: 3px solid #2266e3; font-size: 14.850px; border-radius: 1px; }

.form-body { flex: 1; display: flex; overflow: hidden; padding: 3px 0 0 20px; background: #fff; position: relative; }
.col { display: flex; flex-direction: column; gap: 21px; flex: none; }
.c1 { width: 340px; margin-right: 20px; } .c2 { width: 389px; margin-right: 20px; } .c3 { width: 340px; }
.card { border: 1px solid #c8c8c8; padding: 0 14px; flex: none; }
.c1 .card { height: 420px; padding-top: 4px; }
.field { height: 68px; border-bottom: 1px solid #d0d0d0; display: flex; flex-direction: column; }
.field.look { height: 71px; }
label { color: #444; font-size: 13px; letter-spacing: .1px; display: flex; align-items: center; }
.c1 label { letter-spacing: -.1px; }
label em { color: #c00; }
.field label { height: 29px; padding-left: 21px; flex: none; }
label svg { margin: -4px 4px 0 -16px; }
.field b { font-weight: 600; font-size: 14px; letter-spacing: .38px; height: 35px; display: flex; align-items: center; flex: none; }
.val { padding-left: 22px; color: #222; }
.field b.code { font-size: 14px; letter-spacing: 1px; }
.val.dark, .dark { color: #000; }
.field b.yes { padding-left: 27px; height: 33px; font-size: 13.300px; letter-spacing: .3px; }
.field b.link { color: #1160b7; padding-left: 15px; gap: 6px; font-weight: 700; font-size: 13.500px; height: 37px; letter-spacing: .28px; }
.link svg { stroke-width: 1.500; }
.c3 .field b.link { padding-left: 16px; letter-spacing: .46px; }

.lines { height: 252px; }
.grid-cmd { height: 47px; border-bottom: 1px solid #d0d0d0; display: flex; justify-content: flex-end; align-items: center; padding: 4px 20px 0 0; }
.grid-head { height: 74px; border-bottom: 1px solid #d0d0d0; display: flex; justify-content: flex-end; padding: 44px 6px 0 0; }
.grid-head span { width: 30px; height: 20px; overflow: hidden; border-left: 1px solid #bbb; padding-left: 7px; font-size: 11.5px; line-height: 22px; color: #555; margin-right: 6px; }
.grid-head svg { margin-top: 8px; }
.grid-row { height: 38px; line-height: 42px; width: 45px; overflow: hidden; margin-left: auto; font-size: 13.5px; color: #222; }
.pager { height: 59px; background: #eaeaea; }
.more { margin-left: 347px; transform: translateY(5px); }
.pages { display: flex; align-items: center; justify-content: flex-end; padding: 18px 18px 0 0; color: #a0a0a0; }
.pages span { font-size: 11.200px; font-weight: 600; color: #444; margin: 2px 23px 0 23px; }
.pages svg:first-child { margin-right: 27px; }
.totals { height: 200px; padding-top: 4px; }
.pair { height: 49px; border-bottom: 1px solid #d0d0d0; display: flex; padding-top: 10px; }
.pair label { width: 191px; height: 20px; padding-left: 21px; }
.pair:nth-child(2) label { letter-spacing: .3px; }
.pair b { font-size: 13.700px; font-weight: 600; color: #222; line-height: 24px; letter-spacing: .9px; }
.pair b.money { font-size: 14.200px; letter-spacing: 1.500px; }
.pair b.dark { color: #000; }
.info { height: 287px; }
.info h2 { height: 40px; line-height: 42px; font-size: 15.500px; letter-spacing: .55px; font-weight: 400; color: #222; }
.desc { height: 200px; padding-left: 35px; }
.desc label { height: 38px; letter-spacing: 0; }
.desc b { line-height: 14px; display: block; font-weight: 600; padding-left: 2px; letter-spacing: 3px; }
.body-scroll { position: absolute; right: 0; top: 0; width: 17px; height: 366px; background: #f1f1f1; display: flex; flex-direction: column; align-items: center; padding: 8px 0 5px; color: #555; }
.body-scroll i { width: 17px; height: 57px; background: #c6c6c6; margin-top: 5px; margin-bottom: auto; }

/* Modal */
.veil { position: absolute; inset: 0; background: rgba(0,0,0,.5); }
.dialog { position: absolute; left: 473px; top: 183px; width: 420px; height: 250px; background: #fff; border: 1px solid #e4e4e4; box-shadow: 0 1px 5px rgba(0,0,0,.8); padding: 0 21px; color: #333; }
.dlg-head { display: flex; justify-content: space-between; padding: 19px 5px 0 0; height: 60px; }
.dlg-head h2 { font-size: 15.900px; font-weight: 400; line-height: 28px; }
.dlg-head svg { margin-top: 6px; }
.dialog p { font-size: 13px; letter-spacing: .05px; color: #666; line-height: 22px; padding-left: 21px; }
.dlg-row { display: flex; height: 40px; border-bottom: 1px solid #d6d6d6; padding-left: 21px; }
.dlg-row label { width: 144px; height: 34px; letter-spacing: .03px; }
.dlg-row em { color: #f00; width: 29px; line-height: 35px; font-size: 12px; }
.dlg-row b { color: #000; font-weight: 700; line-height: 37px; font-size: 13.600px; letter-spacing: .3px; }
.dlg-foot { display: flex; justify-content: flex-end; gap: 8px; margin-top: 70px; }
button { width: 84px; height: 35px; border: 1px solid #2266e3; font: 13px "Open Sans", sans-serif; background: #fff; color: #2266e3; }
button.ok { background: #2266e3; color: #fff; }

/* Taskbar */
.taskbar { height: 40px; flex: none; display: flex; background: linear-gradient(90deg, #cfe7ef 0%, #d2e6f0 40%, #d3deec 65%, #d7deeb 100%); }
.start { width: 48px; display: flex; align-items: center; justify-content: center; }
.search { width: 344px; height: 40px; background: #fff; border: 1px solid #c5ccd0; display: flex; align-items: center; gap: 11px; padding-left: 11px; font-size: 14px; color: #333; }
.pinned { width: 603px; flex: none; display: grid; grid-template-columns: 48px 50px 46px 46px 45px 47px 46px 46px 46px 46px 45px 47px 43px; }
.t { display: flex; align-items: center; justify-content: center; position: relative; }
.view { padding-right: 1px; }
.run::after { content: ""; position: absolute; left: calc(50% - 18px); bottom: 0; width: 37px; height: 2px; background: #0078d7; }
.focus { background: rgba(255,255,255,.55); margin: 0 1px; }
.focus::after { left: 0; width: 100%; }
.clip { background: linear-gradient(90deg, #d3d58b 60%, #bccad6 60%); margin: 0 4px; }
.clip::after { left: 0; width: 100%; background: #ffe600; }
.photos::after { background: linear-gradient(90deg, #0078d7 77%, #62aeea 77%); }
.tray { flex: 1; display: grid; align-items: center; color: #111; grid-template-columns: 30px 44px 23px 24px 27px 21px 26px 27px 70px 45px 5px; padding-left: 29px; font-size: 12.500px; }
.temp { font-size: 13px; }
.lang { font-size: 11.500px; }
.clock { display: flex; flex-direction: column; align-items: center; font-size: 11.2px; line-height: 18px; }
.notif { position: relative; padding-left: 8px; }
.notif span { position: absolute; left: 15px; top: 6px; width: 17px; height: 17px; border-radius: 50%; border: 1px solid #888; background: #d5d9de; text-align: center; line-height: 15px; font-size: 11px; }
.peek { width: 1px; height: 40px; background: #aab2bd; margin-left: -1px; }
```
